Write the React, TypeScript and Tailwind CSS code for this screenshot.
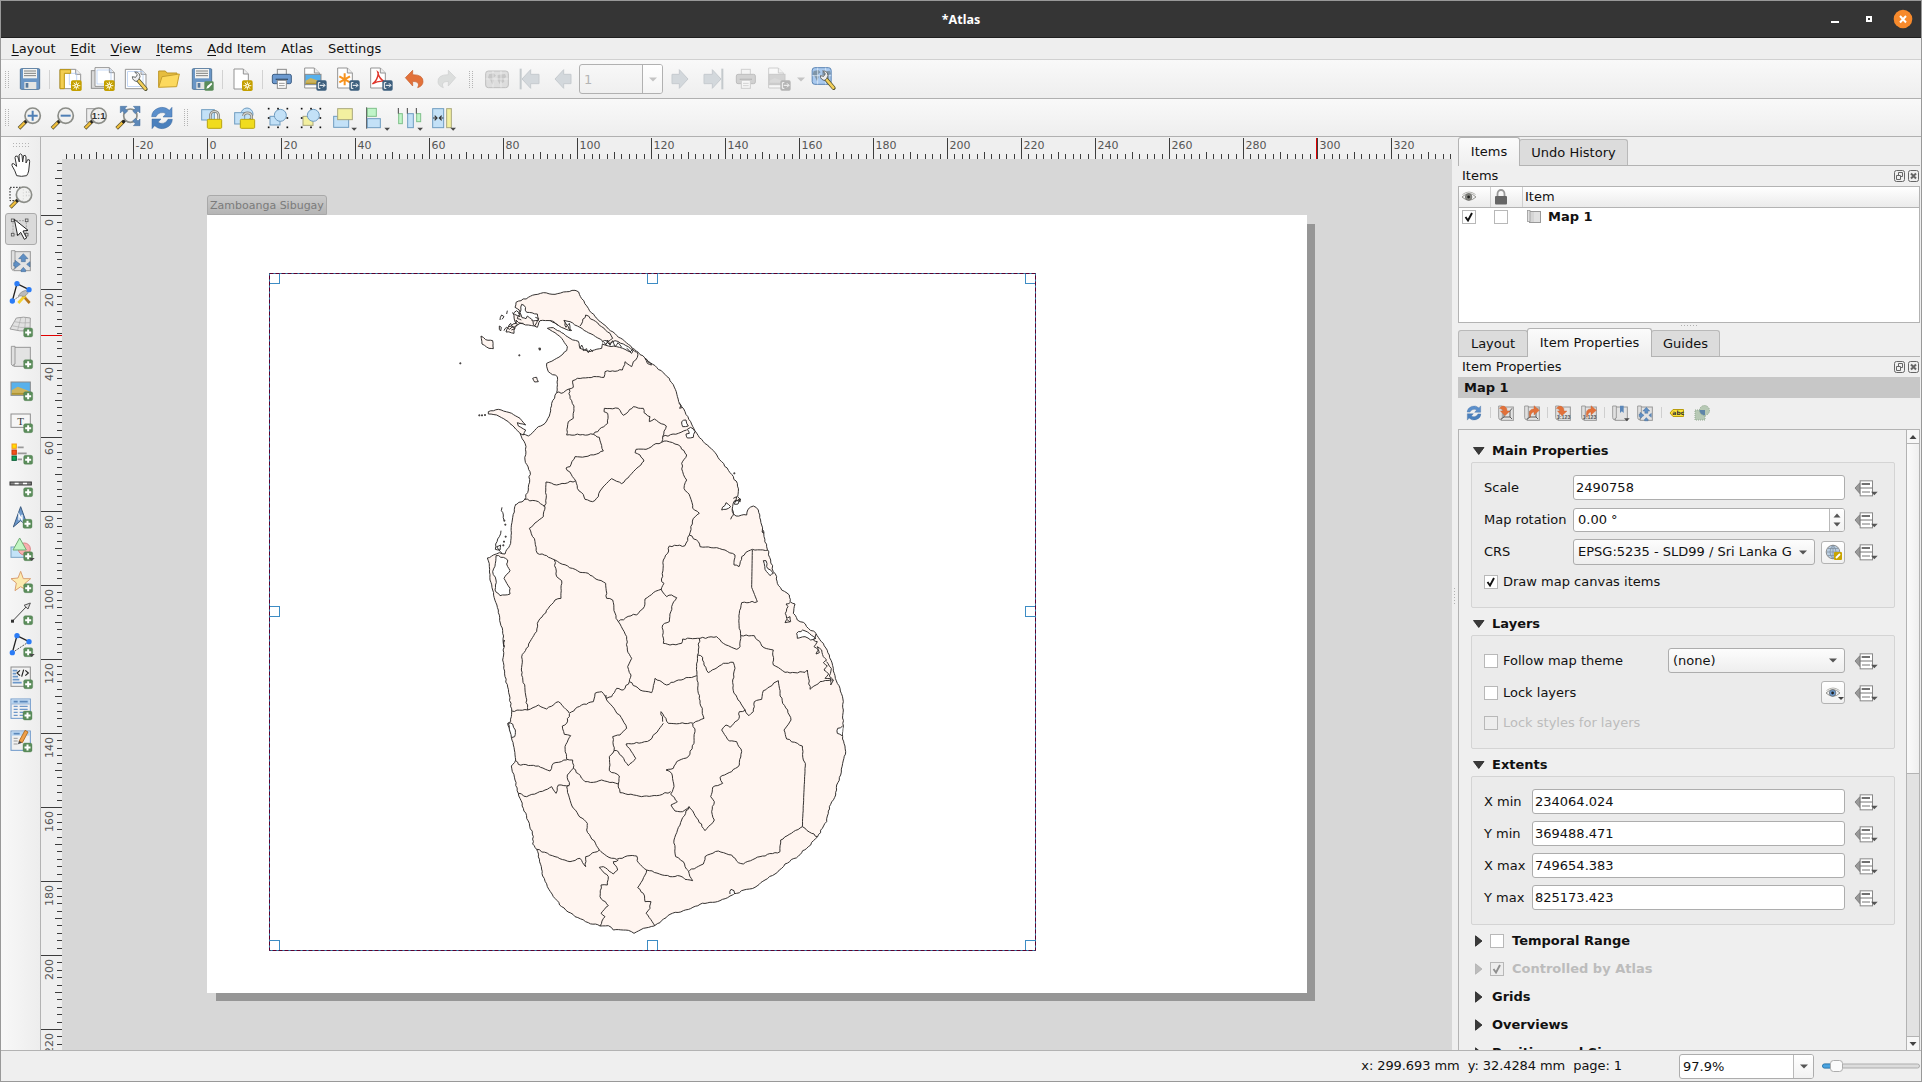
import React from "react";

type Kids = { children?: React.ReactNode };

/* Icon frame: drawings use three units per screen pixel, centred on (cx, cy). */
function Ico({ cx, cy, s = 24, children }: Kids & { cx: number; cy: number; s?: number }) {
  const u = s * 3;
  return (
    <svg width={s} height={s} viewBox={`${cx - u / 2} ${cy - u / 2} ${u} ${u}`} className="block shrink-0 overflow-visible">
      {children}
    </svg>
  );
}

const Slot = ({ children }: Kids) => <div className="flex w-[33px] shrink-0 justify-center">{children}</div>;
const Sep = ({ w }: { w: string }) => (
  <div className={`flex shrink-0 justify-center ${w}`}>
    <div className="h-[19px] w-px bg-[#d2d2d2]" />
  </div>
);
const Grip = ({ w }: { w: string }) => (
  <div className={`flex shrink-0 justify-center ${w}`}>
    <svg width="5" height="17" viewBox="0 0 5 17">
      {[0, 2, 4, 6, 8, 10, 12, 14, 16].map((y) => (
        <g key={y} fill="#b4b4b4">
          <rect x="0" y={y} width="1" height="1" />
          <rect x="3" y={y} width="1" height="1" />
        </g>
      ))}
    </svg>
  </div>
);

const Plus = ({ x, y }: { x: number; y: number }) => (
  <g>
    <rect x={x - 13} y={y - 13} width="27" height="27" rx="5" fill="#5a8c5a" stroke="#4a7a4a" strokeWidth="1" />
    <path d={`M${x - 8.5} ${y + 0.5}h18M${x + 0.5} ${y - 8.5}v18`} stroke="#fff" strokeWidth="6" />
  </g>
);
const Sun = ({ x, y }: { x: number; y: number }) => (
  <g>
    <rect x={x - 16} y={y - 16} width="32" height="32" rx="5" fill="#c4a000" />
    <path d={`M${x} ${y - 12}v24M${x - 12} ${y}h24M${x - 8} ${y - 9}l16 18M${x + 8} ${y - 9}l-16 18`} stroke="#fffbe0" strokeWidth="3" />
    <circle cx={x} cy={y} r="6" fill="#fffbe0" />
    <circle cx={x} cy={y} r="2.6" fill="#c4a000" />
  </g>
);
const Export = ({ x, y }: { x: number; y: number }) => (
  <g>
    <rect x={x - 15} y={y - 15} width="31" height="31" rx="5" fill="#3d5f7d" />
    <path d={`M${x - 3} ${y - 8}h-6v17h6M${x - 5} ${y}h15M${x + 5} ${y - 6}l6 6l-6 6`} stroke="#fff" strokeWidth="3" fill="none" />
  </g>
);
const Caret = ({ x, y, c = "#4a4a4a" }: { x: number; y: number; c?: string }) => (
  <path d={`M${x - 8} ${y - 4}h17l-8.500 9z`} fill={c} />
);
const Wrench = ({ x, y }: { x: number; y: number }) => (
  <g>
    <path d={`M${x} ${y}l24 28`} stroke="#4d4d2a" strokeWidth="12" strokeLinecap="round" />
    <path d={`M${x + 1} ${y + 1}l22 26`} stroke="#f3cf5a" strokeWidth="8" strokeLinecap="round" />
    <path
      d={`M${x + 3} ${y - 1}a13 13 0 0 0 -12 -22l8 8l-5 8l-10 -2a13 13 0 0 0 14 14z`}
      fill="#eee"
      stroke="#4a4f50"
      strokeWidth="2.500"
    />
  </g>
);
const Lens = ({ x, y, r = 23 }: { x: number; y: number; r?: number }) => (
  <g>
    <path d={`M${x - 41} ${y + 38}l22 -22`} stroke="#5a5230" strokeWidth="11" />
    <path d={`M${x - 40} ${y + 37}l19 -19`} stroke="#f0bf3c" strokeWidth="7" />
    <path d={`M${x - 24} ${y + 21}l10 -9`} stroke="#222" strokeWidth="8" />
    <circle cx={x} cy={y} r={r} fill="#f1f1f0" fillOpacity="0.9" stroke="#8b8d88" strokeWidth="5" />
  </g>
);
const Disk = () => (
  <g>
    <rect x="61" y="206" width="58" height="62" rx="3" fill="#6a96c6" stroke="#53779b" strokeWidth="3" />
    <rect x="69" y="207" width="42" height="28" fill="#f3f3f1" />
    <path d="M72 213h36M72 220h36M72 227h36" stroke="#7f8180" strokeWidth="3" />
    <rect x="73" y="246" width="36" height="21" fill="#e4e5e3" />
    <rect x="77" y="249" width="8" height="14" fill="#56789c" />
  </g>
);
const Sheet = ({ x, y, w = 44, h = 60 }: { x: number; y: number; w?: number; h?: number }) => (
  <g>
    <path d={`M${x} ${y}h${w - 15}l15 15v${h - 15}h${-w}z`} fill="#fff" stroke="#939393" strokeWidth="3" />
    <path d={`M${x + w - 15} ${y}v15h15`} fill="#eee" stroke="#939393" strokeWidth="3" />
  </g>
);
const Printer = ({ x, y }: { x: number; y: number }) => (
  <g>
    <rect x={x - 14} y={y - 29} width="27" height="20" fill="#f4f4f4" stroke="#8c8c8c" strokeWidth="3" />
    <rect x={x - 29} y={y - 14} width="57" height="28" rx="5" fill="#6c9ad0" stroke="#3f5f85" strokeWidth="3" />
    <path d={`M${x - 19} ${y + 1}h37`} stroke="#34506f" strokeWidth="4" />
    <rect x={x - 14} y={y + 4} width="27" height="24" fill="#fff" stroke="#8c8c8c" strokeWidth="3" />
    <path d={`M${x - 9} ${y + 13}h17M${x - 9} ${y + 20}h17`} stroke="#999" strokeWidth="3" />
  </g>
);
const Scenery = ({ x, y, w, h }: { x: number; y: number; w: number; h: number }) => (
  <g>
    <rect x={x} y={y} width={w} height={h} fill="#58b1ec" stroke="#8a8a8a" strokeWidth="3" />
    <path
      d={`M${x + 2} ${y + h * 0.62}L${x + w * 0.35} ${y + h * 0.35}L${x + w - 2} ${y + h * 0.7}V${y + h - 2}H${x + 2}z`}
      fill="#cdb45c"
    />
    <path d={`M${x + 2} ${y + h * 0.82}H${x + w - 2}V${y + h - 2}H${x + 2}z`} fill="#b09430" />
  </g>
);
const Sync = ({ cx, cy, s = 24 }: { cx: number; cy: number; s?: number }) => (
  <svg width={s} height={s} viewBox={`${cx - 36} ${cy - 36} 72 72`} className="block shrink-0">
    <path d={`M${cx - 31} ${cy - 4}a31 29 0 0 1 53 -19l8 -9v29h-27l9 -10a20 19 0 0 0 -30 9z`} fill="#5b8fcb" stroke="#3c689c" strokeWidth="1.500" />
    <path d={`M${cx + 31} ${cy + 4}a31 29 0 0 1 -53 19l-8 9v-29h27l-9 10a20 19 0 0 0 30 -9z`} fill="#4a80bd" stroke="#3c689c" strokeWidth="1.500" />
  </svg>
);
const Padlock = ({ x, y, open = false }: { x: number; y: number; open?: boolean }) => (
  <g>
    <path
      d={open ? `M${x - 12} ${y - 10}a13 13 0 0 1 25 0q2 14 -9 11` : `M${x - 12} ${y + 4}v-14a12.500 14 0 0 1 25 0v14`}
      fill="none"
      stroke="#7c7d78"
      strokeWidth="8"
    />
    <path
      d={open ? `M${x - 12} ${y - 10}a13 13 0 0 1 25 0q2 14 -9 11` : `M${x - 12} ${y + 4}v-14a12.500 14 0 0 1 25 0v14`}
      fill="none"
      stroke="#d5d6d1"
      strokeWidth="3.500"
    />
    <rect x={x - 21} y={y} width="43" height="27" rx="3" fill="#f0dc1e" stroke="#b9a410" strokeWidth="3" />
  </g>
);
const Roll = ({ x, y, w = 60, h = 60 }: { x: number; y: number; w?: number; h?: number }) => (
  <g>
    <rect x={x + 8} y={y + 2} width={w - 8} height={h - 2} fill="#e3e3e3" stroke="#979797" strokeWidth="3" />
    <path d={`M${x} ${y - 1}h11v${h - 6}q-6 1 -6 6q-5 -2 -5 -8z`} fill="#e0e0e0" stroke="#8f8f8f" strokeWidth="2.500" />
  </g>
);
const Cross4 = ({ x, y }: { x: number; y: number }) => (
  <g fill="#5f8fc4" stroke="#3e648f" strokeWidth="1.500">
    <path d={`M${x} ${y - 32}l14 15h-8v9h-12v-9h-8z`} />
    <path d={`M${x - 25} ${y - 12}l16 12l-16 12v-7h-4v-10h4z`} />
    <path d={`M${x + 20} ${y - 8}v16l-10 -8z`} />
    <path d={`M${x} ${y + 9}l7 8v5h-14v-5z`} />
  </g>
);

function Arrow({ d, bar }: { d: "l" | "r"; bar?: boolean }) {
  return (
    <Ico cx={0} cy={0}>
      <g transform={d === "l" ? undefined : "scale(-1 1)"}>
        <path d={bar ? "M-24 0L2 -28V-14H27V14H2V28z" : "M-24 0L2 -28V-14H24V14H2V28z"} fill="#d3d8dc" stroke="#c6cbcf" strokeWidth="3" />
        {bar && <rect x="-31" y="-31" width="6" height="62" fill="#c4c9cc" />}
      </g>
    </Ico>
  );
}
const World = ({ x, y, w = 68 }: { x: number; y: number; w?: number }) => (
  <g>
    <rect x={x - w / 2} y={y - 24} width={w} height="50" rx="8" fill="#a9c9ee" stroke="#5b84b3" strokeWidth="3" />
    <path
      d={`M${x - 24} ${y - 14}l14 -3l7 7l-8 6l2 9l-5 12l-6 -14l-7 -7zM${x + 2} ${y - 12}l22 -3l4 9l-8 5l2 9l-6 4l-6 -6l-2 10l-6 -12z`}
      fill="#7f95a8"
    />
    <path d={`M${x - w / 2} ${y}h${w}M${x - 12} ${y - 24}v50M${x + 12} ${y - 24}v50`} stroke="#e8f2fc" strokeWidth="2" />
  </g>
);

function MainToolbar() {
  return (
    <div className="flex h-[39px] shrink-0 items-center border-b border-[#b0b0b0] bg-gradient-to-b from-[#f9f9f9] to-[#eeeeee]">
      <Grip w="w-[12px]" />
      <Slot><Ico cx={90} cy={237}><Disk /></Ico></Slot>
      <Sep w="w-[7px]" />
      <Slot>
        <Ico cx={210} cy={237}>
          <Sheet x={180} y={208} w={62} h={58} />
          <path d="M208 220h22v34h-22z" fill="none" stroke="#a9c5f0" strokeWidth="2" />
          <path d="M180 209h32v11h-19v46h-13z" fill="#f2ce52" stroke="#bb940f" strokeWidth="3" />
          <Sun x={229} y={257} />
        </Ico>
      </Slot>
      <Slot>
        <Ico cx={309} cy={237}>
          <rect x="274" y="212" width="44" height="53" fill="#d9d9d9" stroke="#8f8f8f" strokeWidth="3" />
          <Sheet x={285} y={203} w={58} h={56} />
          <rect x="291" y="210" width="42" height="42" fill="none" stroke="#a9c5f0" strokeWidth="2" />
          <Sun x={328} y={257} />
        </Ico>
      </Slot>
      <Slot>
        <Ico cx={408} cy={237}>
          <Sheet x={376} y={208} w={62} h={58} />
          <rect x="383" y="215" width="46" height="44" fill="none" stroke="#a9c5f0" strokeWidth="2" />
          <Wrench x={413} y={239} />
        </Ico>
      </Slot>
      <Slot>
        <Ico cx={507} cy={237}>
          <path d="M476 262V213h20l5 6h30v8" fill="#e6bd3e" stroke="#bd9628" strokeWidth="3" />
          <path d="M476 262L486 230Q514 226 538 222L530 260z" fill="#fcd95e" stroke="#c69f2e" strokeWidth="3" />
        </Ico>
      </Slot>
      <Slot>
        <Ico cx={90} cy={237}>
          <Disk />
          <rect x="97" y="244" width="28" height="28" rx="4" fill="#5a8c5a" />
          <path d="M103 266l3 -8l12 -10l3 4l-11 12z" fill="#fff" />
        </Ico>
      </Slot>
      <Sep w="w-[8px]" />
      <Slot><Ico cx={732} cy={237}><Sheet x={705} y={207} w={43} h={60} /><Sun x={745} y={257} /></Ico></Slot>
      <Sep w="w-[6px]" />
      <Slot><Ico cx={846} cy={237}><Printer x={846} y={237} /></Ico></Slot>
      <Slot>
        <Ico cx={945} cy={237}>
          <Sheet x={914} y={204} w={44} h={60} />
          <Scenery x={915} y={223} w={48} h={31} />
          <Export x={964} y={256} />
        </Ico>
      </Slot>
      <Slot>
        <Ico cx={1044} cy={237}>
          <Sheet x={1013} y={204} w={44} h={60} />
          <path d="M1034 220v36M1018 229l32 18M1050 229l-32 18" stroke="#f7931e" strokeWidth="6" />
          <Export x={1063} y={256} />
        </Ico>
      </Slot>
      <Slot>
        <Ico cx={1143} cy={237}>
          <Sheet x={1112} y={204} w={44} h={60} />
          <path d="M1133 216q5 22 20 28q-18 -3 -36 8q16 -10 18 -34z" fill="none" stroke="#e0352b" strokeWidth="4" />
          <Export x={1162} y={256} />
        </Ico>
      </Slot>
      <Slot>
        <Ico cx={1242} cy={237}>
          <path d="M1216 233l22 -22v13q33 0 31 22q-1 12 -16 17q10 -18 -15 -19v14z" fill="#e2713a" stroke="#c75e2b" strokeWidth="2" />
        </Ico>
      </Slot>
      <Slot>
        <Ico cx={1341} cy={237}>
          <path d="M1367 233l-22 -22v13q-33 0 -31 22q1 12 16 17q-10 -18 15 -19v14z" fill="#dcdedd" stroke="#cdcfce" strokeWidth="2" />
        </Ico>
      </Slot>
      <Grip w="w-[17px]" />
      <Slot><div className="opacity-45 grayscale"><Ico cx={0} cy={0}><World x={0} y={0} /></Ico></div></Slot>
      <Slot><Arrow d="l" bar /></Slot>
      <Slot><Arrow d="l" /></Slot>
      <div className="flex h-[30px] w-[84px] shrink-0 overflow-hidden rounded-[3px] border border-[#b1b1b1]">
        <div className="flex-1 border-r border-[#b1b1b1] pl-[4px] leading-[29px] text-[#b4b4b4]">1</div>
        <div className="flex w-[19px] items-center justify-center bg-gradient-to-b from-white to-[#f4f4f4]">
          <svg width="8" height="5"><path d="M0 0.500h8l-4 4z" fill="#c4c4c4" /></svg>
        </div>
      </div>
      <Slot><Arrow d="r" /></Slot>
      <Slot><Arrow d="r" bar /></Slot>
      <Slot><div className="opacity-35 grayscale"><Ico cx={0} cy={0}><Printer x={0} y={0} /></Ico></div></Slot>
      <Slot>
        <div className="opacity-40 grayscale">
          <Ico cx={945} cy={237}>
            <Sheet x={914} y={204} w={44} h={60} />
            <Scenery x={915} y={223} w={48} h={31} />
            <Export x={964} y={256} />
          </Ico>
        </div>
      </Slot>
      <div className="flex w-[11px] justify-center"><svg width="8" height="5"><path d="M0 0.500h8l-4 4z" fill="#c4c4c4" /></svg></div>
      <Slot><Ico cx={1150} cy={118}><World x={1146} y={108} w={57} /><Wrench x={1158} y={117} /></Ico></Slot>
    </div>
  );
}

function ActionsToolbar() {
  const blue = { fill: "#c3e1f7", stroke: "#6f9cc0", strokeWidth: 3 };
  const yellow = { fill: "#f3f0a0", stroke: "#a9a77c", strokeWidth: 3 };
  const green = { fill: "#c0f5c8", stroke: "#7fc08a", strokeWidth: 3 };
  const dots = (x: number) =>
    [
      [x - 28, 326], [x, 326], [x + 28, 326], [x - 28, 354], [x + 28, 354], [x - 28, 382], [x, 382], [x + 28, 382],
    ].map(([a, b]) => <rect key={`${a}-${b}`} x={a - 2.5} y={b - 2.5} width="5" height="5" fill="#111" />);
  return (
    <div className="flex h-[38px] shrink-0 items-center border-b border-[#b0b0b0] bg-gradient-to-b from-[#f9f9f9] to-[#eeeeee]">
      <Grip w="w-[12px]" />
      <Slot><Ico cx={90} cy={354}><Lens x={98} y={347} /><path d="M83 347h30M98 332v30" stroke="#4f7fb5" strokeWidth="6" /></Ico></Slot>
      <Slot><Ico cx={189} cy={354}><Lens x={197} y={347} /><path d="M182 347h30" stroke="#4f7fb5" strokeWidth="6" /></Ico></Slot>
      <Slot>
        <Ico cx={288} cy={354}>
          <rect x="260" y="326" width="34" height="40" fill="#eee" stroke="#999" strokeWidth="3" />
          <Lens x={296} y={347} />
          <text x="296" y="357" textAnchor="middle" fontSize="29" fontWeight="bold" fill="#333" fontFamily="Liberation Sans">1:1</text>
        </Ico>
      </Slot>
      <Slot>
        <Ico cx={389} cy={354}>
          <Lens x={393} y={347} r={20} />
          <g fill="#5d88b8" stroke="#416a99" strokeWidth="1.500">
            <path d="M363 319h20l-6 6l8 8l-8 8l-8 -8l-6 6z" />
            <path d="M422 319h-20l6 6l-8 8l8 8l8 -8l6 6z" />
            <path d="M422 377h-20l6 -6l-8 -8l8 -8l8 8l6 -6z" />
          </g>
        </Ico>
      </Slot>
      <Slot><Sync cx={486} cy={354} /></Slot>
      <Grip w="w-[17px]" />
      <Slot><Ico cx={636} cy={354}><rect x="605" y="329" width="38" height="31" {...blue} /><Padlock x={643} y={358} /></Ico></Slot>
      <Slot>
        <Ico cx={735} cy={354}>
          <circle cx="741" cy="342" r="18" {...blue} />
          <rect x="704" y="338" width="30" height="34" {...blue} />
          <Padlock x={742} y={358} open />
        </Ico>
      </Slot>
      <Slot><Ico cx={832} cy={354}><rect x="808" y="349" width="30" height="26" {...blue} /><circle cx="839" cy="346" r="18" {...blue} />{dots(832)}</Ico></Slot>
      <Slot><Ico cx={931} cy={354}><rect x="907" y="349" width="30" height="27" {...yellow} /><circle cx="938" cy="346" r="18" {...blue} />{dots(931)}</Ico></Slot>
      <Slot><Ico cx={1032} cy={354}><rect x="1001" y="349" width="45" height="33" {...blue} /><rect x="1013" y="326" width="44" height="33" {...yellow} /><Caret x={1062} y={387} /></Ico></Slot>
      <Slot><Ico cx={1131} cy={354}><path d="M1100 322v64" stroke="#444" strokeWidth="3" /><rect x="1102" y="325" width="27" height="24" {...green} /><rect x="1102" y="356" width="39" height="27" {...blue} /><Caret x={1161} y={387} /></Ico></Slot>
      <Slot>
        <Ico cx={1230} cy={354}>
          <rect x="1196" y="341" width="11" height="30" {...green} />
          <rect x="1223" y="341" width="17" height="42" {...blue} />
          <rect x="1250" y="341" width="12" height="24" {...green} />
          <path d="M1195 324v17M1222 324v17M1249 324v17" stroke="#444" strokeWidth="3" />
          <Caret x={1260} y={387} />
        </Ico>
      </Slot>
      <Slot>
        <Ico cx={1329} cy={354}>
          <rect x="1298" y="326" width="33" height="57" {...blue} />
          <rect x="1340" y="326" width="14" height="57" {...yellow} />
          <path d="M1299 354h10M1304 347l7 7l-7 7M1330 354h-10M1325 347l-7 7l7 7" stroke="#333" strokeWidth="3.500" fill="none" />
          <Caret x={1359} y={387} />
        </Ico>
      </Slot>
    </div>
  );
}

const Tool = ({ children, active }: Kids & { active?: boolean }) => (
  <div
    className={
      active
        ? "ml-[4px] mr-[3px] flex h-[32px] items-center justify-center rounded-[3px] border border-[#ababab] bg-[#dadada]"
        : "flex h-[32px] items-center justify-center pl-px"
    }
  >
    {children}
  </div>
);

function ToolBox() {
  const node = (x: number, y: number) => <circle cx={x} cy={y} r="8" fill="#2b7cf6" />;
  return (
    <div className="w-[40px] shrink-0 border-r border-[#b3b3b3] bg-gradient-to-r from-[#f8f8f8] to-[#ededed]">
      <div className="flex h-[12px] items-end justify-center pb-[2px] pl-px">
        <svg width="17" height="4">
          {[0, 3, 6, 9, 12, 15].map((x) => (
            <g key={x} fill="#b4b4b4"><rect x={x} width="1" height="1" /><rect x={x} y="3" width="1" height="1" /></g>
          ))}
        </svg>
      </div>
      <Tool>
        <Ico cx={65} cy={106}>
          <path
            d="M52 138Q48 124 38 108Q36 100 43 102L52 110L47 84Q48 76 55 80L60 97L59 76Q63 69 68 76L70 97L73 78Q79 74 80 82L80 100L85 90Q92 88 91 96L88 124Q86 132 82 138Q66 142 52 138z"
            fill="#fff" stroke="#333" strokeWidth="3"
          />
        </Ico>
      </Tool>
      <Tool><Ico cx={64} cy={202}><rect x="31" y="173" width="40" height="40" fill="none" stroke="#222" strokeWidth="3" strokeDasharray="5 4" /><Lens x={73} y={195} /><path d="M80 185v20M88 185v20" stroke="#ccc" strokeWidth="3" strokeDasharray="5 5" /></Ico></Tool>
      <Tool active>
        <Ico cx={64} cy={301}>
          <rect x="40" y="276" width="40" height="42" fill="none" stroke="#999" strokeWidth="2.500" strokeDasharray="6 3" />
          {[[39, 275], [81, 275], [39, 318], [81, 318]].map(([a, b]) => <rect key={`${a}${b}`} x={a - 4} y={b - 4} width="8" height="8" fill="#ddd" stroke="#555" strokeWidth="2.500" />)}
          <path d="M44 272L85 305L70 307L81 328L74 332L63 311L54 321z" fill="#fff" stroke="#222" strokeWidth="3" />
        </Ico>
      </Tool>
      <Tool><Ico cx={64} cy={395}><Roll x={35} y={365} w={57} h={59} /><Cross4 x={71} y={405} /></Ico></Tool>
      <Tool>
        <Ico cx={64} cy={492}>
          <path d="M38 516L52 464L88 482" fill="none" stroke="#222" strokeWidth="4" /><path d="M88 482L38 516" stroke="#555" strokeWidth="3" strokeDasharray="4 3" />
          <path d="M70 500l20 22" stroke="#b5761a" strokeWidth="8" /><path d="M56 522l22 -24" stroke="#f3cf2f" strokeWidth="8" /><path d="M56 500q8 -14 22 -16l8 8l-12 10z" fill="#bbb" stroke="#888" strokeWidth="2" />
          {node(52, 464)}{node(88, 482)}{node(38, 516)}
        </Ico>
      </Tool>
      <Tool>
        <Ico cx={64} cy={588}>
          <path d="M31 600L50 567Q72 562 92 567L91 606Q60 608 31 600z" fill="#e1e1e1" stroke="#9f9f9f" strokeWidth="3" />
          <path d="M36 590q28 8 55 5M44 578q24 6 47 3M64 565l-10 38M78 565l-3 40" fill="none" stroke="#aaa" strokeWidth="2" />
          <Plus x={85} y={610} />
        </Ico>
      </Tool>
      <Tool><Ico cx={64} cy={685}><Roll x={35} y={654} w={57} h={59} /><Plus x={85} y={706} /></Ico></Tool>
      <Tool><Ico cx={64} cy={781}><Scenery x={34} y={760} w={58} h={40} /><Plus x={85} y={802} /></Ico></Tool>
      <Tool><Ico cx={64} cy={877}><rect x="34" y="856" width="58" height="40" fill="#f6f6f6" stroke="#8e8e8e" strokeWidth="3" /><text x="63" y="888" textAnchor="middle" fontSize="33" fill="#333" fontFamily="Liberation Serif">T</text><Plus x={85} y={898} /></Ico></Tool>
      <Tool>
        <Ico cx={64} cy={973}>
          <rect x="37" y="946" width="13" height="13" fill="#fd0" stroke="#f59a1a" strokeWidth="3" /><rect x="37" y="964" width="13" height="13" fill="#f4511e" stroke="#c23c08" strokeWidth="3" /><rect x="37" y="982" width="13" height="13" fill="#0bab55" stroke="#0a5c34" strokeWidth="3" />
          <path d="M54 956h18M54 974h27M54 992h13" stroke="#999" strokeWidth="5" /><Plus x={85} y={993} />
        </Ico>
      </Tool>
      <Tool><Ico cx={64} cy={139}><rect x="31" y="130" width="64" height="9" fill="#888" stroke="#333" strokeWidth="3" /><path d="M45 134.500h12M70 134.500h12" stroke="#fff" strokeWidth="5" /><Plus x={85} y={160} /></Ico></Tool>
      <Tool><Ico cx={64} cy={235}><path d="M63 204L84 262L63 246L41 265z" fill="#6d98cb" stroke="#3b5b80" strokeWidth="3" /><path d="M58 245V228l9 16V228" fill="none" stroke="#fff" strokeWidth="4" /><Plus x={83} y={255} /></Ico></Tool>
      <Tool><Ico cx={64} cy={331}><rect x="34" y="325" width="42" height="31" fill="#c3e3f8" stroke="#7ba4c4" strokeWidth="3" /><circle cx="74" cy="331" r="18" fill="#f8b0b0" stroke="#d98484" strokeWidth="3" /><path d="M60 298L80 334H40z" fill="#c3f6c3" stroke="#70ab75" strokeWidth="3" /><Plus x={85} y={352} /><Caret x={96} y={362} /></Ico></Tool>
      <Tool><Ico cx={64} cy={427}><path d="M63 398L71 420L93 420L76 434L83 456L63 444L46 456L50 433L34 420L55 418z" fill="#fcebaf" stroke="#dba071" strokeWidth="3" /><Plus x={85} y={448} /></Ico></Tool>
      <Tool><Ico cx={64} cy={523}><path d="M38 548L82 502" stroke="#444" strokeWidth="3" /><path d="M92 493L73 500L85 511z" fill="#ddd" stroke="#555" strokeWidth="3" /><rect x="34" y="543" width="9" height="9" fill="#333" /><Plus x={85} y={544} /></Ico></Tool>
      <Tool><Ico cx={64} cy={619}><path d="M38 642L52 591L88 609" fill="none" stroke="#222" strokeWidth="4" /><path d="M88 609L38 642" stroke="#555" strokeWidth="3" strokeDasharray="6 3" />{node(52, 591)}{node(88, 609)}{node(38, 642)}<Plus x={85} y={640} /><Caret x={96} y={650} /></Ico></Tool>
      <Tool>
        <Ico cx={64} cy={715}><rect x="34" y="685" width="58" height="58" fill="#f2f2f2" stroke="#8e8e8e" strokeWidth="3" /><path d="M39 696h14M39 705h10M39 714h16M39 723h20M39 732h27" stroke="#6c97c9" strokeWidth="5" /><path d="M61 695l-9 8l9 8M77 695l9 8l-9 8M72 693l-6 21" fill="none" stroke="#222" strokeWidth="3.500" /><Plus x={85} y={736} /></Ico>
      </Tool>
      <Tool>
        <Ico cx={64} cy={811}><rect x="34" y="781" width="58" height="58" fill="#f2f2f2" stroke="#6c97c9" strokeWidth="3" /><rect x="36" y="783" width="54" height="12" fill="#b8d6f2" /><path d="M42 789h12M60 789h24" stroke="#5c88ba" strokeWidth="5" /><path d="M36 796h54" stroke="#6c97c9" strokeWidth="2" /><path d="M42 803h12M60 803h24M42 812h12M60 812h24M42 821h12M60 821h24M42 830h12M60 830h12" stroke="#6c97c9" strokeWidth="3.500" /><Plus x={83} y={830} /></Ico>
      </Tool>
      <Tool>
        <Ico cx={64} cy={907}><rect x="34" y="877" width="58" height="58" fill="#f0f0f0" stroke="#6c97c9" strokeWidth="3" /><rect x="36" y="879" width="54" height="12" fill="#b8d6f2" /><path d="M42 885h18" stroke="#5c88ba" strokeWidth="5" /><path d="M42 899h12M42 907h12M42 916h12" stroke="#999" strokeWidth="3" /><path d="M58 908l18 -33l9 5l-17 32z" fill="#efa04a" stroke="#a86418" strokeWidth="2.500" /><path d="M55 917l3 -10l9 5z" fill="#444" /><Plus x={83} y={926} /></Ico>
      </Tool>
    </div>
  );
}

/* ---------- rulers ---------- */
function TopRuler() {
  const ticks: React.ReactNode[] = [];
  for (let i = -19; i <= 170; i++) {
    const x = Math.floor(166.4 + i * 7.4);
    if (x < 24 || x > 1409) continue;
    const big = i % 10 === 0;
    ticks.push(<rect key={i} x={x} y={big ? 1 : i % 5 === 0 ? 15 : 17} width="1" height={big ? 21 : i % 5 === 0 ? 7 : 5} fill="#3c3c3c" />);
    if (big) ticks.push(<text key={`t${i}`} x={x + 2.5} y="12" fontSize="11" fill="#555">{i * 2}</text>);
  }
  return (
    <svg width="1411" height="22" className="block shrink-0">
      {ticks}
      <rect x="1275" y="1" width="1" height="21" fill="#e00000" />
    </svg>
  );
}
function LeftRuler() {
  const ticks: React.ReactNode[] = [];
  for (let i = -8; i <= 118; i++) {
    const y = Math.floor(56.4 + i * 7.4);
    if (y < 1 || y > 890) continue;
    const big = i % 10 === 0;
    ticks.push(<rect key={i} x={big ? 0 : i % 5 === 0 ? 14 : 16} y={y} width={big ? 21 : i % 5 === 0 ? 7 : 5} height="1" fill="#3c3c3c" />);
    if (big) ticks.push(<text key={`t${i}`} transform={`translate(12 ${y + 4}) rotate(-90)`} textAnchor="end" fontSize="11" fill="#555">{i * 2}</text>);
  }
  return (
    <svg width="21" height="891" className="block shrink-0">
      {ticks}
      <rect x="0" y="176" width="21" height="1" fill="#e00000" />
    </svg>
  );
}

/* ---------- map geometry, three units per pixel ---------- */
type Pt = [number, number];
const sheet: Record<string, Pt> = { n: [0, 0], e: [360, 450], s: [90, 1110], w: [60, 690] };
function pts(key: string, src: string): Pt[] {
  const [dx, dy] = sheet[key];
  return src.trim().split(/\s+/).map((p) => {
    const [x, y] = p.split(",").map(Number);
    return [x + dx, y + dy] as Pt;
  });
}
function rough(list: Pt[], amp = 2.4): string {
  let seed = 7;
  const rnd = () => {
    seed = (seed * 16807) % 2147483647;
    return seed / 2147483647 - 0.5;
  };
  let d = `M${list[0][0]} ${list[0][1]}`;
  for (let i = 1; i < list.length; i++) {
    const [x0, y0] = list[i - 1];
    const [x1, y1] = list[i];
    const len = Math.hypot(x1 - x0, y1 - y0);
    const n = Math.max(1, Math.round(len / 8));
    for (let k = 1; k < n; k++) {
      const t = k / n;
      const o = rnd() * 2 * amp;
      d += `L${(x0 + (x1 - x0) * t - ((y1 - y0) / len) * o).toFixed(1)} ${(y0 + (y1 - y0) * t + ((x1 - x0) / len) * o).toFixed(1)}`;
    }
    d += `L${x1} ${y1}`;
  }
  return d;
}

const coast: Pt[] = [
  ...pts("n", "243,92 265,82 285,74 310,68 345,73 370,66 405,61 416,66 425,86 445,115 465,140 495,166 530,196 565,223 595,247 620,270 650,292 688,325 706,358 716,395 735,425 752,455 765,483 790,515 820,542 845,575 870,608 892,640 895,665 893,680 903,690 882,694 877,725 888,738 920,735 924,718 940,708 955,720 965,765 972,800 982,838"),
  ...pts("e", "632,420 640,455 650,470 652,490 665,510 688,525 690,545 705,552 700,580 712,600 730,607 745,625 768,640 790,670 808,705 820,745 826,775 840,805 850,845 850,870 848,950"),
  ...pts("s", "1118,290 1122,310 1127,335 1118,370 1112,405 1100,435 1097,465 1078,500 1075,520 1070,545 1057,565 1043,590 1015,620 998,632 985,648 945,672 935,685 915,702 885,720 855,742 830,748 800,760 780,768 750,782 690,793 640,812 600,823 570,848 552,858 520,865 492,880 475,871 430,870 415,857 390,858 355,848 315,830 275,800 250,770 232,740 218,708 214,680 200,628 188,612 190,590 178,550 160,505 150,475 145,460 135,420 124,378 137,360 130,315 125,285 113,250 122,245 125,215 118,165 105,110 98,60 103,0"),
  ...pts("w", "133,440 128,400 115,330 98,270 90,240 88,200 82,174 100,165 118,158 135,162 152,130 157,60 168,12"),
  ...pts("n", "230,703 253,690 265,660 270,605 255,570 258,530 240,490 265,498 295,470 315,460 330,430 335,400 350,368 352,320 325,305 320,280 350,265 380,242 382,230 365,205 345,188 322,175 340,173 365,188 390,205 415,214 420,235 450,245 485,235 487,212 460,195 420,172 390,155 372,151 380,165 392,182 372,175 350,162 332,152 300,152 292,172 265,165 240,160 225,172 222,190 198,186 205,170 228,160 218,128 240,140 238,120 225,112 228,97 243,92"),
];

const borders: Pt[][] = [
  pts("n", "350,368 370,368 387,357 400,352 398,332 412,325 470,320 492,322 495,305 547,300 555,275 575,290 580,275 592,262 592,247"),
  pts("n", "387,357 390,385 402,408 400,445 385,455 380,495 460,493 478,502 490,543 470,552 435,560 405,560 390,590 378,594 407,632 412,655 425,668 435,688 458,695 475,680 480,663 500,640 515,626 545,641 580,605 612,573 600,555 585,548 588,538 618,538 640,525 665,517 680,513 705,522 722,530 740,555 725,580 728,605 740,630 732,655 750,680 758,715 778,730 760,745 748,795 735,827 688,828 683,850 670,870 665,935 672,940 663,960"),
  pts("n", "460,493 503,460 503,430 492,425 493,415 535,415 550,436 565,425 580,410 610,415 612,428 630,440 628,455 643,447 679,468 668,500 665,517"),
  pts("n", "668,500 715,490 740,480"),
  pts("n", "407,632 350,645 318,636 318,700 312,710"),
  [...pts("n", "253,688 295,695 315,710 310,740 280,765 268,775 285,815 292,850 320,857 345,870 420,907 445,910 475,930"), ...pts("w", "437,250 440,295 458,300 468,355 475,365 500,410 502,450 515,475 503,500 513,525 508,545")],
  pts("n", "748,795 775,815 780,830 830,833 855,840 885,855 882,885 897,890 905,860 925,843 937,838 984,840"),
  pts("n", "437,135 460,150 510,190 518,205 500,220"),
  pts("n", "437,135 420,168"),
  pts("w", "283,180 290,230 305,242 303,295 285,300 265,325 232,370 230,395 210,425 205,440 187,463 184,510 195,570 203,630"),
  pts("w", "475,365 520,343 530,345 553,320 555,297 580,278 603,268 620,290 635,285 650,293 635,320 628,365 608,375 610,430 630,435 665,430 668,417 720,415"),
  pts("e", "420,655 470,650 490,670 530,688 540,680 542,647 583,647 612,683 640,690 640,735 675,757 735,757 742,750 750,808 780,785 820,780"),
  pts("e", "592,545 545,548 538,580 537,610 542,647"),
  pts("w", "508,545 540,570 575,578 585,535 620,555 655,540 710,527"),
  pts("w", "508,545 490,570 470,565 455,590 440,595 425,575 405,580 400,605 365,615 328,640 295,605 260,627 235,615 203,630 155,633"),
  pts("e", "418,655 415,690 410,740 415,820 432,895 400,910 325,910 303,875 308,905"),
  pts("e", "413,705 428,712 432,735 445,758 490,730 520,727 525,745 518,780 522,820 540,845 555,870 567,887 580,875 583,845 605,838 610,812 655,782 660,820 668,850 683,870 693,900 672,930 680,957"),
  pts("s", "950,297 997,318 1000,360 1006,370"),
  pts("s", "1043,590 1025,580 997,560 932,600 930,635 870,650 820,672 805,668 785,645 745,633 705,650 700,672 658,692"),
  pts("s", "827,210 808,215 807,235 780,262 768,255 755,270 778,303 800,305 815,335 808,375 785,395 750,412 758,430 728,442 722,470 733,485 725,515 733,540 705,572 685,540 657,500 638,515 615,513 603,495 622,485 602,462 612,440 605,400 588,390 610,385 620,365 655,350 672,310 675,275 668,252"),
  pts("s", "657,500 635,540 612,600 617,650 640,665 668,722 645,718 630,708 600,710 530,690"),
  pts("s", "602,455 560,467 515,470 450,458 445,432 448,408 418,392 418,350 432,332 428,290 450,285 470,265 458,240 432,205 410,180 408,165"),
  pts("s", "432,332 445,335 475,377 497,355 468,312 515,308 540,300 580,250"),
  pts("s", "298,222 290,250 277,258 283,283 302,287 285,320 290,358 308,360 310,385 292,405 298,435 290,440 303,490 325,525 352,550 350,570 388,630"),
  pts("s", "137,362 145,373 205,378 240,393 250,370 290,360"),
  pts("s", "310,385 345,425 370,427 395,420 445,432"),
  pts("s", "145,460 170,470 225,450 245,440 258,460 265,435 298,437"),
  pts("s", "200,628 255,650 300,665 330,655 347,680 347,650 388,630 410,648 440,658 480,647 500,648 505,668 530,690 518,720 503,743 520,760 525,785 543,785 540,805 528,820 555,858"),
  pts("s", "445,660 430,665 443,690 430,702 400,680 388,682 415,710 412,735 393,735 390,770 415,797 393,820 405,830 390,858"),
];
const straight = [...pts("n", "937,840 935,952"), ...pts("e", "592,545")];
const straight2 = pts("s", "1006,370 997,560");

const water: Pt[][] = [
  pts("n", "245,103 252,106 260,127 292,132 295,152 280,153 262,138 258,146 246,143 240,128 245,103"),
  pts("w", "108,167 130,172 143,180 140,192 150,212 132,235 150,265 150,282 120,287 105,270 108,240 98,215 106,190 108,167"),
  pts("e", "610,422 618,422 620,440 640,460 630,467 615,448 610,422"),
  pts("e", "710,640 728,630 748,640 768,655 752,660 735,650 712,655 710,640"),
  pts("e", "485,270 498,248 512,260 498,268 485,270"),
  pts("n", "725,455 738,450 745,468 728,470 725,455"),
  pts("n", "742,478 752,472 765,485 760,502 742,504 738,492 748,490 742,478"),
  pts("s", "115,250 128,252 136,270 134,290 124,293 115,250"),
  pts("e", "848,918 833,925 832,940 846,947"),
  pts("s", "780,762 783,748 792,752 794,762"),
  pts("n", "487,215 500,212 508,222 525,212 550,222 580,240 575,250 555,238 530,230 505,228 487,222"),
];
const islands: Pt[][] = [
  pts("n", "123,198 137,209 158,212 160,236 147,235 126,222 123,198"),
  pts("n", "145,425 175,418 215,430 240,445 257,465 232,458 235,468 257,480 250,495 238,488 205,455 170,435 145,432 145,425"),
  pts("n", "278,325 290,322 295,335 284,336 278,325"),
];
const specks: Pt[][] = [
  pts("n", "180,150 185,135 192,140 186,148"),
  pts("n", "200,132 202,122"),
  pts("n", "178,168 184,172 182,183 178,178 178,168"),
  pts("n", "192,182 200,172 208,178 218,168 225,176 214,180"),
  pts("n", "205,172 212,160 220,174 232,165 228,150 236,158 250,160"),
  pts("n", "222,128 230,122 238,134 232,146 244,150"),
  pts("n", "275,150 284,168 290,158 296,146 286,142"),
  pts("n", "295,235 301,234 300,241"),
  pts("n", "330,152 345,158 355,166"),
  pts("n", "372,152 378,172 388,160 390,178 396,182"),
  pts("n", "420,235 425,225 430,242 440,236 445,248 452,238 458,246"),
  pts("n", "490,215 497,225 503,210 510,226 518,212 526,230 534,218 545,232"),
  pts("n", "560,235 570,246 578,238 590,247"),
  pts("n", "615,265 635,285 622,280 615,265"),
  pts("n", "716,400 723,405 719,415 728,412"),
  pts("w", "126,22 124,32 130,45 132,60"),
  pts("w", "123,92 118,110 107,132 106,148 120,150 122,135 110,140 126,160"),
  pts("e", "520,235 530,230 524,245 540,235 534,252 522,252 528,240 542,245"),
  pts("e", "517,268 520,285 512,298"),
  pts("e", "690,548 678,552 684,560 676,580 680,595 690,590 692,605 675,608 680,598 690,606"),
  pts("e", "768,642 760,660 772,665 762,680 775,690 768,702 778,698 772,680 785,690 790,710 800,720 790,728 802,738 792,750 806,762 795,775 812,775 812,795 820,780 808,768 814,745 800,725"),
  pts("n", "967,778 972,790 965,785"),
];
const dotPts: Pt[] = pts("n", "61,280 238,256 299,238 118,436 126,436 135,435 883,610 193,752 196,764 197,800 192,815 190,826");

function MapDrawing() {
  return (
    <svg width="766" height="677" viewBox="-513 9 2298 2031" className="absolute left-[207px] top-[114px] block">
      <g fill="none" stroke="#353231" strokeWidth="3" strokeLinejoin="round">
        <path d={rough(coast, 2) + "Z"} fill="#fff5f0" />
        {islands.map((p, i) => <path key={i} d={rough(p, 1)} fill="#fff5f0" />)}
        {water.map((p, i) => <path key={i} d={rough(p, 2)} fill="#fff" />)}
        {borders.map((p, i) => <path key={i} d={rough(p, 2.2)} />)}
        <path d={rough(straight, 0)} />
        <path d={rough(straight2, 0.4)} />
        {specks.map((p, i) => <path key={i} d={rough(p, 1.5)} />)}
        {dotPts.map(([x, y]) => <rect key={`${x}-${y}`} x={x - 1.5} y={y - 1.5} width="3" height="3" />)}
      </g>
    </svg>
  );
}

function Canvas() {
  const handle = "absolute h-[11px] w-[11px] border border-[#3d8cc4] bg-white";
  return (
    <div className="relative flex-1 overflow-hidden bg-[#d7d7d7]">
      <div className="absolute left-[145px] top-[36px] h-[20px] w-[120px] rounded-t-[3px] border border-[#a9a9a9] bg-gradient-to-b from-[#cbcbcb] to-[#b5b5b5] pl-[2px] text-[11px] leading-[19px] text-[#7b7b7b]">
        Zamboanga Sibugay
      </div>
      <div className="absolute left-[154px] top-[65px] h-[777px] w-[1099px] bg-[#969696]" />
      <div className="absolute left-[145px] top-[56px] h-[778px] w-[1100px] bg-white" />
      <MapDrawing />
      <div className={`${handle} left-[207px] top-[114px]`} />
      <div className={`${handle} left-[585px] top-[114px]`} />
      <div className={`${handle} left-[963px] top-[114px]`} />
      <div className={`${handle} left-[207px] top-[447px]`} />
      <div className={`${handle} left-[963px] top-[447px]`} />
      <div className={`${handle} left-[207px] top-[781px]`} />
      <div className={`${handle} left-[585px] top-[781px]`} />
      <div className={`${handle} left-[963px] top-[781px]`} />
      <svg width="767" height="678" className="absolute left-[207px] top-[114px] block">
        <rect x="0.5" y="0.5" width="766" height="677" fill="none" stroke="#2f86b0" />
        <rect x="0.5" y="0.5" width="766" height="677" fill="none" stroke="#5c0030" strokeDasharray="4 2" />
      </svg>
    </div>
  );
}

/* ---------- right dock ---------- */
const Tab = ({ w, active, children }: Kids & { w: string; active?: boolean }) => (
  <div
    className={
      active
        ? `relative -mb-px h-[29px] ${w} shrink-0 rounded-t-[3px] border border-b-0 border-[#b3b3b3] bg-gradient-to-b from-[#fbfbfb] to-[#efefef] text-center leading-[27px]`
        : `h-[26px] ${w} shrink-0 rounded-t-[3px] border border-[#b9b9b9] border-b-0 bg-[#dcdcdc] text-center leading-[25px]`
    }
  >
    {children}
  </div>
);
const DockTitle = ({ children, h }: Kids & { h: string }) => (
  <div className={`flex ${h} shrink-0 items-center pl-[4px]`}>
    <span className="flex-1">{children}</span>
    <svg width="26" height="12" fill="none" stroke="#666">
      <rect x="0.500" y="0.500" width="10" height="11" rx="2" />
      <path d="M4.500 5V2.500h4v4h-2M2.500 5.500h4v4h-4z" />
      <rect x="14.500" y="0.500" width="10" height="11" rx="2" />
      <path d="M17 3.500l5 5M22 3.500l-5 5" strokeWidth="2" />
    </svg>
  </div>
);
const Check = ({ on, dim }: { on?: boolean; dim?: boolean }) => (
  <div className={`flex h-[14px] w-[14px] shrink-0 items-center justify-center border border-[#b8b8b8] ${dim ? "bg-[#ededed]" : "bg-white"}`}>
    {on && (
      <svg width="10" height="10"><path d="M1.500 5l2.500 3.500L8 1" fill="none" stroke={dim ? "#8f8f8f" : "#111"} strokeWidth="1.900" /></svg>
    )}
  </div>
);
const DataDefined = () => (
  <svg width="24" height="18" viewBox="1240 146 72 54" className="block shrink-0">
    <path d="M1258 157v33l-15 -17z" fill="#999" stroke="#777" strokeWidth="2.500" />
    <rect x="1258.500" y="151.500" width="37" height="45" fill="#fff" stroke="#888" strokeWidth="3" />
    <path d="M1263 161h25" stroke="#555" strokeWidth="5" />
    <path d="M1258 173h37M1264 185h24" stroke="#777" strokeWidth="3" />
    <path d="M1291 184h20l-10 11z" fill="#555" />
  </svg>
);
const Field = ({ w, h = "h-[25px]", pl = "pl-[2px]", children }: Kids & { w: string; h?: string; pl?: string }) => (
  <div className={`flex ${w} ${h} ${pl} shrink-0 items-center overflow-hidden rounded-[3px] border border-[#adadad] bg-white`}>{children}</div>
);
const Combo = ({ w, h, children }: Kids & { w: string; h: string }) => (
  <div className={`flex ${w} ${h} shrink-0 items-center rounded-[3px] border border-[#adadad] bg-gradient-to-b from-[#fdfdfd] to-[#eeeeee] pl-[4px] pr-[7px]`}>
    <span className="flex-1 overflow-hidden whitespace-nowrap">{children}</span>
    <svg width="8" height="5" className="ml-[7px]"><path d="M0 0.500h8l-4 4z" fill="#555" /></svg>
  </div>
);
const Btn = ({ children }: Kids) => (
  <div className="flex h-[23px] w-[24px] shrink-0 items-center justify-center rounded-[3px] border border-[#b3b3b3] bg-gradient-to-b from-white to-[#f1f1f1]">{children}</div>
);
const Head = ({ h, children }: Kids & { h: string }) => (
  <div className={`flex ${h} items-center pl-[14px] font-bold`}>
    <svg width="12" height="8" className="mr-[7px]"><path d="M0.500 0.500h10.500l-5.250 7z" fill="#3a3a3a" stroke="#222" strokeWidth="0.800" /></svg>
    {children}
  </div>
);
const Closed = ({ dim, box, children }: Kids & { dim?: boolean; box?: boolean }) => (
  <div className={`flex h-[28px] items-center pl-[16px] font-bold ${dim ? "text-[#bcbcbc]" : ""}`}>
    <svg width="8" height="12" className={box ? "mr-[7px]" : "mr-[9px]"}><path d="M0.500 0.800v10.400l6.500 -5.200z" fill={dim ? "#bcbcbc" : "#3a3a3a"} stroke={dim ? "#b0b0b0" : "#222"} strokeWidth="0.800" /></svg>
    {box && <div className="mr-[8px]"><Check on={dim} dim={dim} /></div>}
    {children}
  </div>
);
const boxCls = "ml-[12px] w-[424px] rounded-[2px] border border-[#d4d4d4] bg-[#ebebeb] pl-[12px]";

const Eye = ({ blue }: { blue?: boolean }) => (
  <svg width="16" height="12" viewBox="0 0 16 12" className="block">
    <path d="M1 6Q8 -1 15 6Q8 12.500 1 6z" fill="#f4f4f4" stroke="#8a8a85" strokeWidth="0.900" />
    <path d="M1.500 3.500Q8 -1.500 14.500 3.500" fill="none" stroke="#a5a5a0" strokeWidth="0.800" />
    <circle cx="7.600" cy="6" r="3.300" fill={blue ? "#6b9bd0" : "#85867f"} stroke="#666" strokeWidth="0.700" />
    <circle cx="7.600" cy="6" r="1.400" fill="#222" />
  </svg>
);

function PropIcon({ kind }: { kind: string }) {
  const swoopIn = <path d="M-20 -14q12 -14 22 0l1 8h9l-15 14l-14 -14h9q-2 -6 -12 -8z" fill="#e2713a" stroke="#c75e2b" strokeWidth="1" />;
  const swoopOut = <path d="M-6 14q-8 -26 12 -27v-9l16 14l-16 14v-9q-10 2 -12 17z" fill="#e2713a" stroke="#c75e2b" strokeWidth="1" />;
  return (
    <Ico cx={0} cy={0} s={16}>
      <Roll x={-22} y={-20} w={44} h={42} />
      {kind.startsWith("ext") && <g fill="none" stroke="#444" strokeWidth="2.500"><rect x="-6" y="-5" width="18" height="17" /><path d="M-14 18l8 -6M18 18l-6 -6M18 -14l-6 8" /></g>}
      {kind.startsWith("sc") && <text x="2" y="19" textAnchor="middle" fontSize="16" fontWeight="bold" fill="#555" fontFamily="Liberation Sans">1:123</text>}
      {kind.endsWith("In") && swoopIn}
      {kind.endsWith("Out") && swoopOut}
      {kind === "bookmark" && <g><path d="M0 -22h11v22l-5.500 -5l-5.500 5z" fill="#5b87b9" /><Caret x={20} y={20} /></g>}
      {kind === "move" && <g transform="translate(4 4) scale(0.75)"><Cross4 x={0} y={4} /></g>}
    </Ico>
  );
}

const ThinSep = () => <div className="h-[11px] w-px shrink-0 bg-[#cfcfcf]" />;

function Dock() {
  return (
    <div className="flex w-[468px] shrink-0">
      <div className="flex w-[6px] items-center justify-center">
        <svg width="2" height="17" className="mt-[6px]">
          {[0, 3, 6, 9, 12, 15].map((y) => <rect key={y} y={y} width="1" height="1" fill="#b0b0b0" />)}
        </svg>
      </div>
      <div className="flex min-w-0 flex-1 flex-col">
        <div className="flex h-[29px] shrink-0 items-end border-b border-[#b3b3b3]">
          <Tab w="w-[62px]" active>Items</Tab>
          <div className="-ml-px"><Tab w="w-[109px]">Undo History</Tab></div>
        </div>
        <DockTitle h="h-[20px]">Items</DockTitle>
        <div className="h-[137px] shrink-0 border border-[#b3b3b3] bg-white">
          <div className="flex h-[21px] items-center border-b border-[#b3b3b3] bg-gradient-to-b from-white to-[#ebebeb]">
            <div className="flex h-full w-[32px] items-center border-r border-[#cfcfcf] pl-[2px]"><Eye /></div>
            <div className="flex h-full w-[32px] items-center border-r border-[#cfcfcf] pl-[3px]">
              <svg width="14" height="16"><path d="M3.500 8V5a3.500 4 0 0 1 7 0v3" fill="none" stroke="#999" strokeWidth="1.800" /><rect x="1" y="7" width="12" height="8.500" rx="1" fill="#666" /></svg>
            </div>
            <span className="pl-[2px]">Item</span>
          </div>
          <div className="flex h-[17px] items-center pl-[3px]">
            <Check on />
            <div className="ml-[18px]"><Check /></div>
            <svg width="14" height="13" className="ml-[19px]">
              <rect x="2.500" y="1.500" width="11" height="11" fill="#d5d5d5" stroke="#999" />
              <rect x="0.500" y="0.500" width="2.500" height="11" fill="#e0e0e0" stroke="#999" strokeWidth="0.800" />
              <rect x="7" y="2" width="6" height="10" fill="#eee" opacity="0.500" />
            </svg>
            <b className="ml-[7px]">Map 1</b>
          </div>
        </div>
        <div className="flex h-[5px] shrink-0 items-center justify-center">
          <svg width="17" height="1">{[0, 3, 6, 9, 12, 15].map((x) => <rect key={x} x={x} width="1" height="1" fill="#b0b0b0" />)}</svg>
        </div>
        <div className="flex h-[29px] shrink-0 items-end border-b border-[#b3b3b3]">
          <Tab w="w-[70px]">Layout</Tab>
          <div className="-ml-px"><Tab w="w-[125px]" active>Item Properties</Tab></div>
          <div className="-ml-px"><Tab w="w-[69px]">Guides</Tab></div>
        </div>
        <DockTitle h="h-[20px]">Item Properties</DockTitle>
        <div className="h-[21px] shrink-0 bg-[#c7c7c7] pl-[6px] font-bold leading-[21px]">Map 1</div>
        <div className="flex h-[31px] shrink-0 items-center pb-[2px] pl-[8px]">
          <Sync cx={0} cy={0} s={16} />
          <div className="flex w-[16px] justify-center"><ThinSep /></div>
          <PropIcon kind="extIn" /><div className="w-[10px]" /><PropIcon kind="extOut" />
          <div className="flex w-[15px] justify-center"><ThinSep /></div>
          <PropIcon kind="scIn" /><div className="w-[10px]" /><PropIcon kind="scOut" />
          <div className="flex w-[15px] justify-center"><ThinSep /></div>
          <PropIcon kind="bookmark" /><div className="w-[9px]" /><PropIcon kind="move" />
          <div className="flex w-[16px] justify-center"><ThinSep /></div>
          <svg width="16" height="16"><path d="M1 8l3 -3.500h10.500v7H4z" fill="#fbe33a" stroke="#b99c0c" /><text x="9.300" y="10.300" fontSize="6" fontWeight="bold" textAnchor="middle" fill="#333">abc</text></svg>
          <svg width="16" height="16" className="ml-[9px]"><rect x="1" y="5" width="10" height="10" fill="#b7c9b5" stroke="#93a991" strokeDasharray="1 1" /><circle cx="10.500" cy="5.500" r="5" fill="#b7c9b5" stroke="#93a991" strokeDasharray="1 1" /><path d="M5.500 5h5.500v5.200a5 5 0 0 1 -5.500 -5.200z" fill="#5f85a8" /></svg>
        </div>
        <div className="flex min-h-0 flex-1 border-l border-r border-t border-[#b3b3b3]">
          <div className="w-[447px] shrink-0 overflow-hidden">
            <Head h="h-[32px] pt-[9px]">Main Properties</Head>
            <div className={`${boxCls} h-[146px] pt-[12px]`}>
              <div className="flex h-[25px] items-center">
                <span className="w-[89px]">Scale</span><Field w="w-[272px]">2490758</Field><div className="ml-[9px]"><DataDefined /></div>
              </div>
              <div className="mt-[8px] flex h-[24px] items-center">
                <span className="w-[89px] whitespace-nowrap">Map rotation</span>
                <Field w="w-[272px]" h="h-[24px]" pl="pl-[4px]">
                  <span className="flex-1">0.00 °</span>
                  <div className="flex h-full w-[15px] items-center justify-center border-l border-[#b9b9b9] bg-gradient-to-b from-white to-[#f2f2f2]">
                    <svg width="8" height="14"><path d="M0.500 4.500h7L4 0.500zM0.500 9.500h7L4 13.500z" fill="#555" /></svg>
                  </div>
                </Field>
                <div className="ml-[9px]"><DataDefined /></div>
              </div>
              <div className="mt-[7px] flex h-[26px] items-center">
                <span className="w-[89px]">CRS</span>
                <Combo w="w-[242px]" h="h-[26px]">EPSG:5235 - SLD99 / Sri Lanka G</Combo>
                <div className="ml-[6px]">
                  <Btn>
                    <svg width="17" height="16"><circle cx="8" cy="8" r="6.800" fill="#b9cde0" stroke="#8d8d8d" /><path d="M1.500 8h13M8 1v14M3 4.500h10M3 11.500h10M8 1q-6 7 0 14M8 1q6 7 0 14" fill="none" stroke="#7b8b9b" strokeWidth="0.700" /><rect x="9" y="8" width="8" height="8" rx="1" fill="#c9a400" /><path d="M11 14l4 -4" stroke="#fff" strokeWidth="1.800" /></svg>
                  </Btn>
                </div>
                <div className="ml-[9px]"><DataDefined /></div>
              </div>
              <div className="mt-[10px] flex h-[14px] items-center gap-[5px]"><Check on />Draw map canvas items</div>
            </div>
            <Head h="h-[27px] pt-[5px]">Layers</Head>
            <div className={`${boxCls} h-[114px] pt-[12px]`}>
              <div className="flex h-[25px] items-center">
                <Check /><span className="ml-[5px] w-[165px]">Follow map theme</span>
                <Combo w="w-[177px]" h="h-[25px]">(none)</Combo><div className="ml-[9px]"><DataDefined /></div>
              </div>
              <div className="mt-[8px] flex h-[23px] items-center">
                <Check /><span className="ml-[5px] w-[318px]">Lock layers</span>
                <Btn><div className="relative"><Eye blue /><svg width="6" height="4" className="absolute -bottom-[2px] -right-[3px]"><path d="M0 0h6l-3 3z" fill="#444" /></svg></div></Btn>
                <div className="ml-[9px]"><DataDefined /></div>
              </div>
              <div className="mt-[12px] flex h-[14px] items-center gap-[5px] text-[#bcbcbc]"><Check dim />Lock styles for layers</div>
            </div>
            <Head h="h-[27px] pt-[5px]">Extents</Head>
            <div className={`${boxCls} h-[149px] pt-[12px]`}>
              {[["X min", "234064.024"], ["Y min", "369488.471"], ["X max", "749654.383"], ["Y max", "825173.423"]].map(([a, b]) => (
                <div key={a} className="mb-[7px] flex h-[25px] items-center">
                  <span className="w-[48px] pt-px">{a}</span><Field w="w-[313px]">{b}</Field><div className="ml-[9px]"><DataDefined /></div>
                </div>
              ))}
            </div>
            <div className="pt-[2px]">
              <Closed box>Temporal Range</Closed>
              <Closed box dim>Controlled by Atlas</Closed>
              <Closed>Grids</Closed>
              <Closed>Overviews</Closed>
              <Closed>Position and Size</Closed>
            </div>
          </div>
          <div className="flex flex-1 flex-col border-l border-[#b3b3b3] bg-[#e2e2e2]">
            <div className="flex h-[14px] shrink-0 items-center justify-center border-b border-[#b3b3b3] bg-[#f7f7f7]"><svg width="8" height="4"><path d="M0.500 4h7L4 0z" fill="#444" /></svg></div>
            <div className="h-[330px] shrink-0 border-b border-[#b3b3b3] bg-gradient-to-r from-[#fafafa] to-[#efefef]" />
            <div className="flex-1" />
            <div className="flex h-[14px] shrink-0 items-center justify-center border-t border-[#b3b3b3] bg-[#f7f7f7]"><svg width="8" height="4"><path d="M0.500 0h7L4 4z" fill="#444" /></svg></div>
          </div>
        </div>
      </div>
    </div>
  );
}

const menu = [["L", "ayout"], ["E", "dit"], ["V", "iew"], ["I", "tems"], ["A", "dd Item"], ["", "Atlas"], ["", "Settings"]];

export default function App() {
  return (
    <div className="flex h-[1082px] w-[1922px] flex-col overflow-hidden border border-[#999] bg-[#efefef] font-['DejaVu_Sans',sans-serif] text-[13px] leading-[16px] text-[#111]">
      <div className="flex h-[37px] shrink-0 items-center border-b border-[#1f1f1f] bg-[#353535]">
        <div className="w-[110px]" />
        <div className="flex-1 pt-px text-center font-['Noto_Sans',sans-serif] text-[12.5px] font-bold text-white">*Atlas</div>
        <div className="flex w-[110px] items-center">
          <svg width="110" height="36">
            <rect x="20" y="20" width="8" height="2" fill="#fff" />
            <rect x="56" y="16" width="4" height="4" fill="none" stroke="#fff" strokeWidth="2" />
            <circle cx="92" cy="18" r="9.300" fill="#f78a2c" />
            <path d="M89 15l6 6.500M95 15l-6 6.500" stroke="#fff" strokeWidth="2" />
          </svg>
        </div>
      </div>
      <div className="flex h-[22px] shrink-0 items-center gap-[14.8px] border-b border-[#d0d0d0] bg-[#eeeeee] pl-[10.500px]">
        {menu.map(([a, b]) => (
          <span key={b} className="whitespace-nowrap"><span className="underline decoration-1 underline-offset-2">{a}</span>{b}</span>
        ))}
      </div>
      <MainToolbar />
      <ActionsToolbar />
      <div className="flex min-h-0 flex-1 border-b border-[#b3b3b3]">
        <ToolBox />
        <div className="flex w-[1411px] shrink-0 flex-col">
          <TopRuler />
          <div className="flex min-h-0 flex-1">
            <LeftRuler />
            <Canvas />
          </div>
        </div>
        <Dock />
      </div>
      <div className="flex h-[30px] shrink-0 items-center">
        <div className="w-[1678px] whitespace-pre pr-[57px] text-right tracking-[-0.08px]">x: 299.693 mm  y: 32.4284 mm  page: 1</div>
        <div className="flex h-[25px] w-[135px] shrink-0 overflow-hidden rounded-[3px] border border-[#adadad] bg-white">
          <div className="flex-1 border-r border-[#b9b9b9] pl-[3px] leading-[23px]">97.9%</div>
          <div className="flex w-[19px] items-center justify-center bg-gradient-to-b from-white to-[#f2f2f2]"><svg width="8" height="5"><path d="M0 0.500h8l-4 4z" fill="#555" /></svg></div>
        </div>
        <svg width="100" height="16" className="ml-[7px]">
          <rect x="1.500" y="6" width="97" height="4" rx="2" fill="#dcdcdc" stroke="#adadad" />
          <rect x="1.500" y="6" width="14" height="4" rx="2" fill="#4aa3df" stroke="#2d7fb8" />
          <rect x="9.500" y="2.500" width="12" height="11" rx="3" fill="#fbfbfb" stroke="#adadad" />
        </svg>
      </div>
    </div>
  );
}
